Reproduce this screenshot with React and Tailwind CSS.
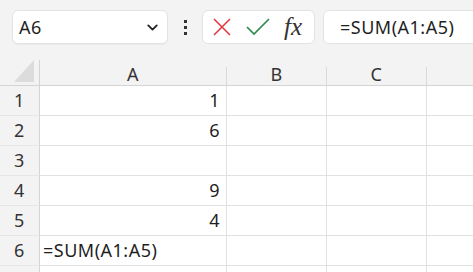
import { ChevronDown } from "lucide-react";

const rows = [
  { n: 1, a: "1" },
  { n: 2, a: "6" },
  { n: 3, a: "" },
  { n: 4, a: "9" },
  { n: 5, a: "4" },
  { n: 6, a: "=SUM(A1:A5)", left: true },
  { n: "", a: "" },
];

export default function App() {
  return (
    <div
      className="w-[473px] h-[272px] overflow-hidden bg-[#f3f3f3] text-[#1f1f1f] tracking-[0.5px]"
      style={{ fontFamily: '"Noto Sans", "Open Sans", sans-serif' }}
    >
      {/* Formula bar */}
      <div className="h-[60px] flex items-start pt-[10px] pl-[12px] whitespace-nowrap">
        <div className="w-[156px] h-[34px] shrink-0 bg-white border border-[#e3e3e3] rounded-[6px] flex items-center justify-between pl-[6px] pr-[6px] shadow-[0_1px_1px_rgba(0,0,0,0.04)]">
          <span className="text-[18px] leading-none">A6</span>
          <ChevronDown size={17} strokeWidth={2.6} className="text-[#222]" />
        </div>
        <div className="w-[34px] h-[34px] shrink-0 flex flex-col items-center justify-center gap-[3px]">
          <span className="w-[3px] h-[3px] bg-[#333]" />
          <span className="w-[3px] h-[3px] bg-[#333]" />
          <span className="w-[3px] h-[3px] bg-[#333]" />
        </div>
        <div className="w-[113px] h-[34px] shrink-0 bg-white border border-[#e3e3e3] rounded-[6px] flex items-center pl-[9px]">
          <svg width="20" height="20" viewBox="0 0 20 20" className="shrink-0">
            <path d="M2 2 L18 18 M18 2 L2 18" stroke="#e0393e" strokeWidth="1.6" fill="none" />
          </svg>
          <svg width="26" height="18" viewBox="0 0 26 18" className="shrink-0 ml-[13px]">
            <path d="M2 9 L9 16 L24 1" stroke="#2f8a4e" strokeWidth="1.7" fill="none" />
          </svg>
          <span
            className="ml-[13px] text-[25px] leading-none italic text-[#333] -mt-[2px] tracking-normal"
            style={{ fontFamily: '"Liberation Serif", "DejaVu Serif", serif' }}
          >
            fx
          </span>
        </div>
        <div className="ml-[8px] w-[170px] h-[34px] shrink-0 bg-white border border-[#e3e3e3] rounded-[6px] flex items-center pl-[16px]">
          <span className="text-[18px] leading-none">=SUM(A1:A5)</span>
        </div>
      </div>

      {/* Grid */}
      <div className="flex h-[26px] border-b border-[#d4d4d4]">
        <div className="w-[40px] shrink-0 border-r border-[#d4d4d4] flex items-end justify-end pr-[5px] pb-[3px]">
          <svg width="20" height="22" viewBox="0 0 20 22">
            <polygon points="20,0 20,22 0,22" fill="#dcdcdc" />
          </svg>
        </div>
        {[
          ["A", "w-[187px]"],
          ["B", "w-[100px]"],
          ["C", "w-[100px]"],
          ["", "w-[100px]"],
        ].map(([c, w], i) => (
          <div key={i} className={`${w} shrink-0 flex items-end`}>
            <div className="h-[18px] w-full border-r border-[#dadada] flex items-center justify-center text-[18px] leading-none text-[#333] pb-[4px]">
              {c}
            </div>
          </div>
        ))}
      </div>

      {rows.map((r, i) => (
        <div key={i} className="flex h-[30px]">
          <div className="w-[40px] shrink-0 border-r border-b border-r-[#d4d4d4] border-b-[#e6e6e6] flex items-center justify-center text-[18px] text-[#333]">
            {r.n}
          </div>
          <div
            className={`w-[187px] shrink-0 bg-white border-r border-b border-[#e1e1e1] flex items-center text-[18px] whitespace-nowrap ${
              r.left ? "justify-start pl-[3px]" : "justify-end pr-[6px]"
            }`}
          >
            {r.a}
          </div>
          <div className="w-[100px] shrink-0 bg-white border-r border-b border-[#e1e1e1]" />
          <div className="w-[100px] shrink-0 bg-white border-r border-b border-[#e1e1e1]" />
          <div className="w-[100px] shrink-0 bg-white border-r border-b border-[#e1e1e1]" />
        </div>
      ))}
    </div>
  );
}
